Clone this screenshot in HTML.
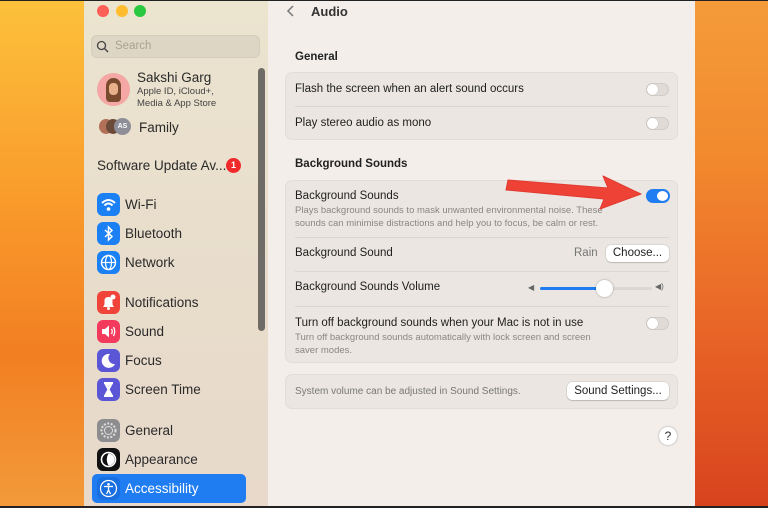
<!DOCTYPE html>
<html><head><meta charset="utf-8"><style>
*{margin:0;padding:0;box-sizing:border-box}
body{width:768px;height:508px;overflow:hidden;position:relative;font-family:"Liberation Sans",sans-serif;background:#222}
#wall{position:absolute;left:0;top:1px;width:768px;height:505px;background:linear-gradient(180deg,#fbc23a 0%,#f79a2a 35%,#f2832a 60%,#ea6a26 100%)}
#wallL{position:absolute;left:0;top:1px;width:84px;height:505px;background:linear-gradient(180deg,#fcc13b 0%,#f99a2b 40%,#f27f22 70%,#f29a3a 100%)}
#wallR{position:absolute;left:695px;top:1px;width:73px;height:505px;background:linear-gradient(180deg,#f49b3a 0%,#f28a2e 30%,#ea6a28 60%,#d8431e 100%)}
.a{position:absolute;white-space:nowrap}
#side{position:absolute;left:84px;top:1px;width:184px;height:505px;background:linear-gradient(180deg,#ebe4cf,#e8dccb 60%,#e8d9cb)}
#main{position:absolute;left:268px;top:1px;width:427px;height:505px;background:#f3eeea}
.dot{position:absolute;width:12px;height:12px;border-radius:50%;top:5px}
.ic{position:absolute;left:97px;width:23px;height:23px;border-radius:6px}
.ic svg{position:absolute;left:0;top:0}
.lab{position:absolute;left:125px;font-size:13.5px;color:#2a2a2a}
.card{position:absolute;left:285px;width:393px;background:#ebe6e1;border-radius:7px;border:1px solid #e3ddd7}
.t{font-size:11.5px;color:#1e1e1e}
.d{font-size:9.5px;color:#8a8683}
.sep{position:absolute;left:295px;width:374px;height:1px;background:#dcd6d0}
.tg{position:absolute;width:23px;height:13px;border-radius:7px;background:#e0dbd6;border:1px solid #d2ccc6}
.tg::after{content:"";position:absolute;left:0;top:0;width:11px;height:11px;border-radius:50%;background:#fff;box-shadow:0 0 1px rgba(0,0,0,.3)}
.btn{position:absolute;background:#fff;border-radius:5px;box-shadow:0 0 1px rgba(0,0,0,.4),0 1px 1px rgba(0,0,0,.15);font-size:11.5px;color:#222;text-align:center}
</style></head><body>
<div id="wall"></div><div id="wallL"></div><div id="wallR"></div>
<div id="side"></div>
<div id="main"></div>
<div class="dot" style="left:97px;background:#fe5f57"></div>
<div class="dot" style="left:116px;background:#febc2e"></div>
<div class="dot" style="left:134px;background:#28c840"></div>
<div class="a" style="left:91px;top:35px;width:169px;height:23px;border-radius:6px;background:#ded6c5;border:1px solid #d5ccbb"></div>
<svg class="a" style="left:96px;top:40px" width="13" height="13"><circle cx="5.5" cy="5.5" r="4" fill="none" stroke="#444" stroke-width="1.3"/><line x1="8.5" y1="8.5" x2="12" y2="12" stroke="#444" stroke-width="1.4"/></svg>
<div class="a" style="left:115px;top:40px;font-size:11.5px;color:#a9a294">Search</div>
<div class="a" style="left:258px;top:68px;width:7px;height:263px;border-radius:4px;background:#6f6b66"></div>
<div class="a" style="left:97px;top:73px;width:33px;height:33px;border-radius:50%;background:#f4a7a4"></div>
<div class="a" style="left:106px;top:78px;width:15px;height:24px;border-radius:8px 8px 4px 4px;background:#7a4a2e"></div>
<div class="a" style="left:109px;top:83px;width:9px;height:12px;border-radius:4px;background:#e9b08c"></div>
<div class="a" style="left:137px;top:70px;font-size:13.5px;color:#2a2a2a">Sakshi Garg</div>
<div class="a" style="left:137px;top:86px;font-size:9.5px;color:#444">Apple ID, iCloud+,</div>
<div class="a" style="left:137px;top:98px;font-size:9.5px;color:#444">Media &amp; App Store</div>
<div class="a" style="left:99px;top:119px;width:14px;height:15px;border-radius:50%;background:#b27058"></div>
<div class="a" style="left:106px;top:119px;width:14px;height:15px;border-radius:50%;background:#6b4a3a"></div>
<div class="a" style="left:114px;top:118px;width:17px;height:17px;border-radius:50%;background:#8e8e99;color:#fff;font-size:7px;text-align:center;line-height:17px;font-weight:bold">AS</div>
<div class="a" style="left:139px;top:120px;font-size:13.5px;color:#2a2a2a">Family</div>
<div class="a" style="left:97px;top:158px;font-size:13.5px;color:#2a2a2a">Software Update Av...</div>
<div class="a" style="left:226px;top:158px;width:15px;height:15px;border-radius:50%;background:#f02a2a;color:#fff;font-size:9px;font-weight:bold;text-align:center;line-height:15px">1</div>

<div class="ic" style="top:193px;background:#1c80f5"><svg width="23" height="23"><path d="M5 10 Q11.5 4 18 10" fill="none" stroke="#fff" stroke-width="2"/><path d="M7.5 12.5 Q11.5 8.5 15.5 12.5" fill="none" stroke="#fff" stroke-width="2"/><circle cx="11.5" cy="16" r="1.8" fill="#fff"/></svg></div><div class="lab" style="top:197px">Wi-Fi</div>
<div class="ic" style="top:222px;background:#1c80f5"><svg width="23" height="23"><path d="M8 8 L15 14.5 L11.5 18 L11.5 5 L15 8.5 L8 15" fill="none" stroke="#fff" stroke-width="1.5"/></svg></div><div class="lab" style="top:226px">Bluetooth</div>
<div class="ic" style="top:251px;background:#1c80f5"><svg width="23" height="23"><circle cx="11.5" cy="11.5" r="7" fill="none" stroke="#fff" stroke-width="1.4"/><ellipse cx="11.5" cy="11.5" rx="3" ry="7" fill="none" stroke="#fff" stroke-width="1.2"/><line x1="4.5" y1="11.5" x2="18.5" y2="11.5" stroke="#fff" stroke-width="1.2"/></svg></div><div class="lab" style="top:255px">Network</div>
<div class="ic" style="top:291px;background:#f0443a"><svg width="23" height="23"><path d="M6 16 L17 16 L15.5 13.5 L15.5 10 Q15.5 6 11.5 6 Q7.5 6 7.5 10 L7.5 13.5 Z" fill="#fff"/><circle cx="11.5" cy="17.5" r="1.5" fill="#fff"/><circle cx="16" cy="6" r="2.5" fill="#fff"/></svg></div><div class="lab" style="top:295px">Notifications</div>
<div class="ic" style="top:320px;background:#f33a5c"><svg width="23" height="23"><path d="M5 9 L8 9 L12 5.5 L12 17.5 L8 14 L5 14 Z" fill="#fff"/><path d="M14.5 9 Q16 11.5 14.5 14 M16.5 7 Q19 11.5 16.5 16" fill="none" stroke="#fff" stroke-width="1.3"/></svg></div><div class="lab" style="top:324px">Sound</div>
<div class="ic" style="top:349px;background:#5a56d6"><svg width="23" height="23"><path d="M13 5 A7 7 0 1 0 18 15 A6 6 0 0 1 13 5 Z" fill="#fff"/></svg></div><div class="lab" style="top:353px">Focus</div>
<div class="ic" style="top:378px;background:#5a56d6"><svg width="23" height="23"><path d="M7 5 L16 5 M7 18 L16 18 M8 5 L15 18 M15 5 L8 18" stroke="#fff" stroke-width="2" fill="none"/><path d="M9 17 L11.5 13 L14 17 Z M9.5 6 L13.5 6 L11.5 9 Z" fill="#fff"/></svg></div><div class="lab" style="top:382px">Screen Time</div>
<div class="ic" style="top:419px;background:#8d8d90"><svg width="23" height="23"><circle cx="11.5" cy="11.5" r="7" fill="none" stroke="#ddd" stroke-width="2" stroke-dasharray="2 1.5"/><circle cx="11.5" cy="11.5" r="4" fill="none" stroke="#ddd" stroke-width="1"/></svg></div><div class="lab" style="top:423px">General</div>
<div class="ic" style="top:448px;background:#111"><svg width="23" height="23"><circle cx="11.5" cy="11.5" r="7" fill="none" stroke="#fff" stroke-width="1.6"/><path d="M11.5 5.5 A6 6 0 0 1 11.5 17.5 Q8 11.5 11.5 5.5 Z" fill="#fff"/></svg></div><div class="lab" style="top:452px">Appearance</div>
<div class="a" style="left:92px;top:474px;width:154px;height:29px;border-radius:5px;background:#1f7cf1"></div>
<div class="ic" style="top:477px;background:#1a6fe0"><svg width="23" height="23"><circle cx="11.5" cy="11.5" r="8" fill="none" stroke="#fff" stroke-width="1.2"/><circle cx="11.5" cy="7.3" r="1.3" fill="#fff"/><path d="M7 9.5 L16 9.5 M11.5 9.5 L11.5 13 M11.5 13 L9.5 17 M11.5 13 L13.5 17" stroke="#fff" stroke-width="1.3" fill="none"/></svg></div>
<div class="lab" style="top:481px;color:#fff">Accessibility</div>

<svg class="a" style="left:286px;top:4px" width="10" height="14"><path d="M7 2 L2 7 L7 12" fill="none" stroke="#777" stroke-width="1.5"/></svg>
<div class="a" style="left:311px;top:4px;font-size:13px;font-weight:bold;color:#333">Audio</div>
<div class="a" style="left:295px;top:51px;font-size:11.5px;font-weight:bold;color:#222">General</div>
<div class="card" style="top:72px;height:68px"></div>
<div class="a t" style="left:295px;top:83px">Flash the screen when an alert sound occurs</div>
<div class="sep" style="top:106px"></div>
<div class="a t" style="left:295px;top:117px">Play stereo audio as mono</div>
<div class="tg" style="left:646px;top:83px"></div>
<div class="tg" style="left:646px;top:117px"></div>
<div class="a" style="left:295px;top:158px;font-size:11.5px;font-weight:bold;color:#222">Background Sounds</div>
<div class="card" style="top:180px;height:183px"></div>
<div class="a t" style="left:295px;top:190px">Background Sounds</div>
<div class="a d" style="left:295px;top:205px">Plays background sounds to mask unwanted environmental noise. These</div>
<div class="a d" style="left:295px;top:218px">sounds can minimise distractions and help you to focus, be calm or rest.</div>
<div class="a" style="left:646px;top:189px;width:24px;height:14px;border-radius:7px;background:#1f7cf1"></div>
<div class="a" style="left:657px;top:191px;width:11px;height:10px;border-radius:50%;background:#fff"></div>
<div class="sep" style="top:237px"></div>
<div class="a t" style="left:295px;top:247px">Background Sound</div>
<div class="a" style="left:574px;top:247px;font-size:11.5px;color:#777">Rain</div>
<div class="btn" style="left:606px;top:245px;width:63px;height:17px;line-height:17px">Choose...</div>
<div class="sep" style="top:271px"></div>
<div class="a t" style="left:295px;top:281px">Background Sounds Volume</div>
<div class="a" style="left:528px;top:283px;font-size:8px;color:#666">◀</div>
<div class="a" style="left:540px;top:287px;width:112px;height:3px;border-radius:2px;background:#dcd7d2"></div>
<div class="a" style="left:540px;top:287px;width:65px;height:3px;border-radius:2px;background:#1f7cf1"></div>
<div class="a" style="left:596px;top:280px;width:17px;height:17px;border-radius:50%;background:#fff;box-shadow:0 0 2px rgba(0,0,0,.35)"></div>
<div class="a" style="left:655px;top:282px;font-size:8px;color:#666">◀)</div>
<div class="sep" style="top:306px"></div>
<div class="a t" style="left:295px;top:317px">Turn off background sounds when your Mac is not in use</div>
<div class="a d" style="left:295px;top:332px">Turn off background sounds automatically with lock screen and screen</div>
<div class="a d" style="left:295px;top:345px">saver modes.</div>
<div class="tg" style="left:646px;top:317px"></div>
<div class="card" style="top:374px;height:35px"></div>
<div class="a" style="left:295px;top:386px;font-size:10px;color:#777">System volume can be adjusted in Sound Settings.</div>
<div class="btn" style="left:567px;top:382px;width:102px;height:18px;line-height:18px">Sound Settings...</div>
<div class="a" style="left:659px;top:427px;width:18px;height:18px;border-radius:50%;background:#fff;box-shadow:0 0 2px rgba(0,0,0,.35);font-size:12px;text-align:center;line-height:18px;color:#333">?</div>
<svg class="a" style="left:500px;top:170px" width="150" height="42"><path d="M8 10 L108 18 L103 6 L141 24 L100 39 L104 29 L6 20 Z" fill="#ef4237" stroke="#e23a30" stroke-width="1" stroke-linejoin="round"/></svg>
</body></html>
